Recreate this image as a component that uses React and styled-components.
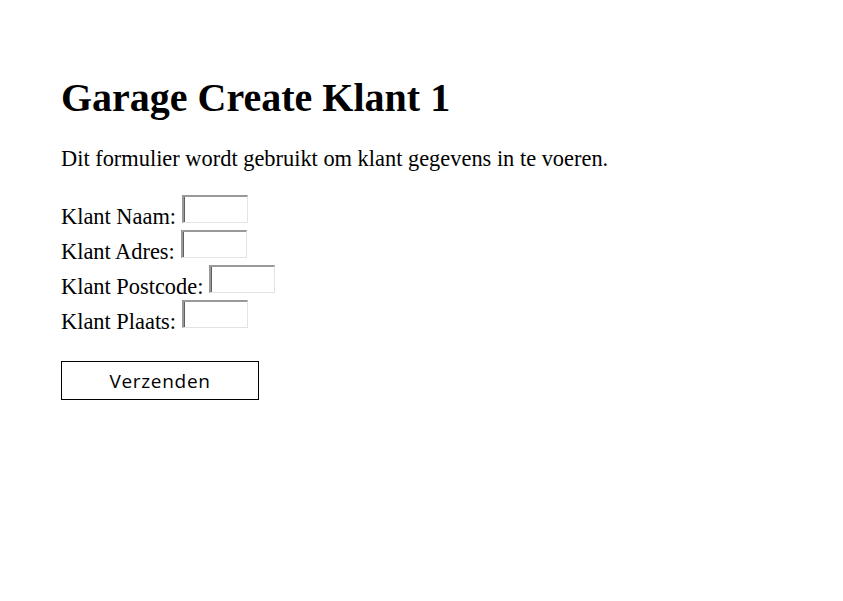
import React from "react";
import styled, { createGlobalStyle } from "styled-components";

const GlobalStyle = createGlobalStyle`
  body {
    margin: 0;
    background: #ffffff;
    font-family: "Liberation Serif", "Times New Roman", serif;
    color: #000000;
  }
`;

function App() {
  const fields = [
    { id: "naam", label: "Klant Naam:" },
    { id: "adres", label: "Klant Adres:" },
    { id: "postcode", label: "Klant Postcode:" },
    { id: "plaats", label: "Klant Plaats:" },
  ];

  return (
    <Page>
      <GlobalStyle />
      <Title>Garage Create Klant 1</Title>
      <Intro>Dit formulier wordt gebruikt om klant gegevens in te voeren.</Intro>
      <Form onSubmit={(e) => e.preventDefault()}>
        {fields.map((f) => (
          <Row key={f.id}>
            <Label htmlFor={f.id}>{f.label}</Label>
            <Input id={f.id} type="text" />
          </Row>
        ))}
        <SubmitButton type="submit">Verzenden</SubmitButton>
      </Form>
    </Page>
  );
}

const Page = styled.div`
  padding: 75px 61px;
`;

const Title = styled.h1`
  font-size: 40px;
  font-weight: 700;
  line-height: 46px;
  margin: 0 0 25px;
`;

const Intro = styled.p`
  font-size: 22.4px;
  line-height: 25px;
  margin: 0 0 17px;
`;

const Form = styled.form`
  display: flex;
  flex-direction: column;
  align-items: flex-start;
  font-size: 22.4px;
`;

const Row = styled.div`
  display: flex;
  align-items: flex-end;
  gap: 6px;
  height: 35px;
`;

const Label = styled.label`
  line-height: 1;
  margin-bottom: -5px;
`;

const Input = styled.input`
  box-sizing: border-box;
  width: 66px;
  height: 28px;
  border-style: solid;
  border-width: 2px 1px 1px 2px;
  border-color: #999999 #e3e3e3 #e3e3e3 #999999;
  box-shadow: inset 1px 0 0 #5f5f5f;
  background: #ffffff;
  padding: 0;
  font-size: 16px;
  outline: none;
`;

const SubmitButton = styled.button`
  margin-top: 33px;
  width: 198px;
  height: 39px;
  border: 1px solid #000000;
  background: #ffffff;
  font-family: "Open Sans", "Noto Sans", sans-serif;
  font-size: 19px;
  letter-spacing: 0.7px;
  color: #000000;
  cursor: pointer;
`;

export default App;
